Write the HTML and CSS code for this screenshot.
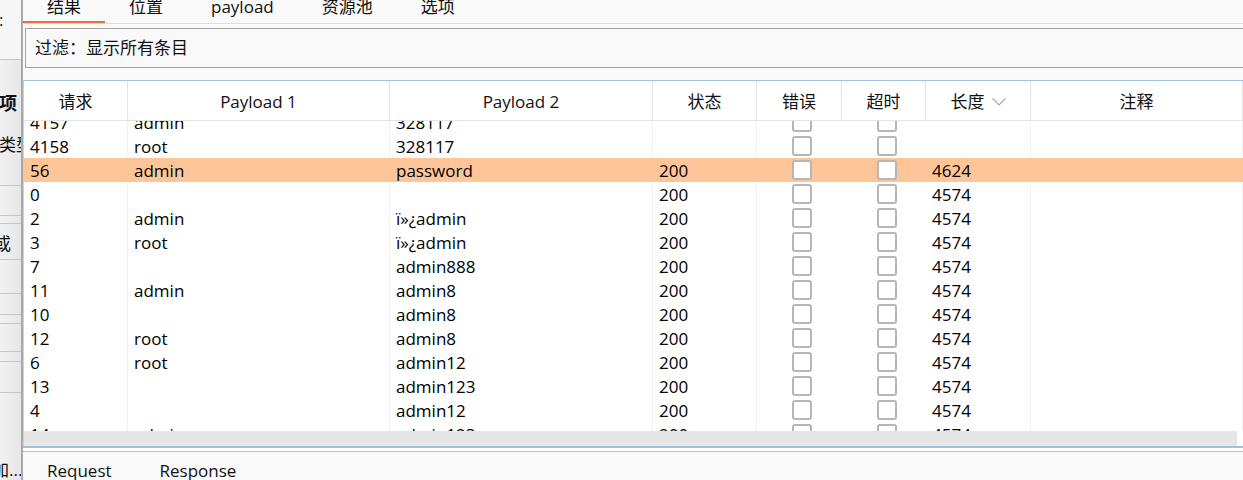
FILE: index.html
```html
<!DOCTYPE html>
<html lang="zh-CN">
<head>
<meta charset="utf-8">
<title>Intruder 结果</title>
<link rel="stylesheet" href="styles.css">
</head>
<body>
<div class="app">
  <aside class="side">
    <div class="sblk s1"><span class="stxt colon">:</span></div>
    <div class="sblk s2"><span class="stxt bold x1">项</span><span class="stxt x2">类型</span></div>
    <div class="sblk s3"></div>
    <div class="sblk s4"></div>
    <div class="sblk s5"><span class="stxt x3">或</span></div>
    <div class="sblk s6"></div>
    <div class="sblk s7"></div>
    <div class="sblk s8"></div>
    <div class="sblk s9"></div>
    <div class="sblk s10"></div>
    <div class="sblk s11"></div>
    <div class="sblk s12"><span class="stxt x4">加...</span></div>
  </aside>
  <main class="main">
    <nav class="tabs">
      <div class="tab active">结果</div>
      <div class="tab">位置</div>
      <div class="tab">payload</div>
      <div class="tab">资源池</div>
      <div class="tab">选项</div>
    </nav>
    <div class="filterwrap">
      <div class="filter">过滤：显示所有条目</div>
    </div>
    <section class="table">
      <div class="thead row-grid">
        <div class="th">请求</div>
        <div class="th">Payload 1</div>
        <div class="th">Payload 2</div>
        <div class="th">状态</div>
        <div class="th">错误</div>
        <div class="th">超时</div>
        <div class="th">长度<svg class="chev" width="14" height="8" viewBox="0 0 14 8"><path d="M0.5 0.5 L7 7 L13.5 0.5" fill="none" stroke="#aaaaaa" stroke-width="1.2"/></svg></div>
        <div class="th">注释</div>
      </div>
      <div class="tbody">
        <div class="rows">
          <div class="tr row-grid first"><div class="td">4157</div><div class="td">admin</div><div class="td">328117</div><div class="td"></div><div class="td cb"><span class="box"></span></div><div class="td cb"><span class="box"></span></div><div class="td"></div><div class="td"></div></div>
          <div class="tr row-grid"><div class="td">4158</div><div class="td">root</div><div class="td">328117</div><div class="td"></div><div class="td cb"><span class="box"></span></div><div class="td cb"><span class="box"></span></div><div class="td"></div><div class="td"></div></div>
          <div class="tr row-grid sel"><div class="td">56</div><div class="td">admin</div><div class="td">password</div><div class="td">200</div><div class="td cb"><span class="box"></span></div><div class="td cb"><span class="box"></span></div><div class="td">4624</div><div class="td"></div></div>
          <div class="tr row-grid"><div class="td">0</div><div class="td"></div><div class="td"></div><div class="td">200</div><div class="td cb"><span class="box"></span></div><div class="td cb"><span class="box"></span></div><div class="td">4574</div><div class="td"></div></div>
          <div class="tr row-grid"><div class="td">2</div><div class="td">admin</div><div class="td">ï»¿admin</div><div class="td">200</div><div class="td cb"><span class="box"></span></div><div class="td cb"><span class="box"></span></div><div class="td">4574</div><div class="td"></div></div>
          <div class="tr row-grid"><div class="td">3</div><div class="td">root</div><div class="td">ï»¿admin</div><div class="td">200</div><div class="td cb"><span class="box"></span></div><div class="td cb"><span class="box"></span></div><div class="td">4574</div><div class="td"></div></div>
          <div class="tr row-grid"><div class="td">7</div><div class="td"></div><div class="td">admin888</div><div class="td">200</div><div class="td cb"><span class="box"></span></div><div class="td cb"><span class="box"></span></div><div class="td">4574</div><div class="td"></div></div>
          <div class="tr row-grid"><div class="td">11</div><div class="td">admin</div><div class="td">admin8</div><div class="td">200</div><div class="td cb"><span class="box"></span></div><div class="td cb"><span class="box"></span></div><div class="td">4574</div><div class="td"></div></div>
          <div class="tr row-grid"><div class="td">10</div><div class="td"></div><div class="td">admin8</div><div class="td">200</div><div class="td cb"><span class="box"></span></div><div class="td cb"><span class="box"></span></div><div class="td">4574</div><div class="td"></div></div>
          <div class="tr row-grid"><div class="td">12</div><div class="td">root</div><div class="td">admin8</div><div class="td">200</div><div class="td cb"><span class="box"></span></div><div class="td cb"><span class="box"></span></div><div class="td">4574</div><div class="td"></div></div>
          <div class="tr row-grid"><div class="td">6</div><div class="td">root</div><div class="td">admin12</div><div class="td">200</div><div class="td cb"><span class="box"></span></div><div class="td cb"><span class="box"></span></div><div class="td">4574</div><div class="td"></div></div>
          <div class="tr row-grid"><div class="td">13</div><div class="td"></div><div class="td">admin123</div><div class="td">200</div><div class="td cb"><span class="box"></span></div><div class="td cb"><span class="box"></span></div><div class="td">4574</div><div class="td"></div></div>
          <div class="tr row-grid"><div class="td">4</div><div class="td"></div><div class="td">admin12</div><div class="td">200</div><div class="td cb"><span class="box"></span></div><div class="td cb"><span class="box"></span></div><div class="td">4574</div><div class="td"></div></div>
          <div class="tr row-grid"><div class="td">14</div><div class="td">admin</div><div class="td">admin123</div><div class="td">200</div><div class="td cb"><span class="box"></span></div><div class="td cb"><span class="box"></span></div><div class="td">4574</div><div class="td"></div></div>
        </div>
      </div>
      <div class="hscroll"><div class="track"></div></div>
    </section>
    <div class="gap"></div>
    <nav class="btabs">
      <div class="btab">Request</div>
      <div class="btab">Response</div>
    </nav>
  </main>
</div>
</body>
</html>
```

FILE: styles.css
```css
* { box-sizing: border-box; }
html, body {
  margin: 0;
  padding: 0;
  width: 1243px;
  height: 480px;
  overflow: hidden;
  background: #ffffff;
}
body {
  font-family: "Open Sans", "Noto Sans CJK SC", sans-serif;
  font-size: 17px;
  color: #111111;
}
.app {
  display: flex;
  width: 1243px;
  height: 480px;
}

/* left strip */
.side {
  width: 23px;
  flex: none;
  border-right: 2px solid #a9a9a9;
  background: linear-gradient(to right, #f1f1f1, #e7e7e7);
  overflow: hidden;
  display: flex;
  flex-direction: column;
}
.sblk {
  border-bottom: 1px solid #c6c6c6;
  position: relative;
  flex: none;
}
.s1 { height: 60px; background: #f6f6f6; }
.s2 { height: 126px; }
.s3 { height: 30px; }
.s4 { height: 8px; }
.s5 { height: 36px; }
.s6 { height: 34px; }
.s7 { height: 21px; }
.s8 { height: 9px; }
.s9 { height: 28px; }
.s10 { height: 10px; }
.s11 { height: 31px; }
.s12 { flex: 1; border-bottom: none; }
.stxt {
  position: absolute;
  left: 0;
  white-space: nowrap;
  font-size: 17px;
  line-height: 20px;
  color: #111;
}
.colon { top: 10px; left: -1px; }
.bold { font-weight: 700; font-size: 18px; }
.x1 { top: 33px; left: -1px; }
.x2 { top: 75px; left: -1px; }
.x3 { top: 10px; left: -6px; }
.x4 { bottom: 0px; left: -8px; }

/* main */
.main {
  flex: 1;
  min-width: 0;
  display: flex;
  flex-direction: column;
  background: #fafafa;
  overflow: hidden;
}
.tabs {
  height: 24px;
  flex: none;
  display: flex;
  border-bottom: 1px solid #dedede;
  background: #fafafa;
}
.tab {
  height: 23px;
  padding: 0 24px;
  line-height: 14px;
  white-space: nowrap;
  color: #111;
}
.tab.active {
  border-bottom: 2px solid #f2683c;
}
.filterwrap {
  flex: none;
  padding: 4px 0 0 2px;
  height: 56px;
}
.filter {
  height: 40px;
  margin-right: -10px;
  border: 1px solid #a3a3a3;
  background: #f9f9f9;
  padding-left: 9px;
  line-height: 38px;
}
.table {
  flex: none;
  border-top: 1px solid #9fc1e6;
  border-left: 1px solid #c6d3e0;
  border-bottom: 2px solid #a1bde0;
  background: #ffffff;
  display: flex;
  flex-direction: column;
}
.row-grid {
  display: grid;
  grid-template-columns: 104px 262px 263px 104px 85px 84px 105px 1fr;
}
.thead {
  height: 40px;
  border-bottom: 1px solid #e3e3e3;
  background: #ffffff;
}
.th {
  border-right: 1px solid #e3e3e3;
  display: flex;
  align-items: center;
  justify-content: center;
  gap: 7px;
  line-height: 20px;
  color: #111;
  padding-top: 2px;
}
.chev { margin-top: 1px; }
.tbody {
  height: 310px;
  overflow: hidden;
}
.rows { margin-top: -11px; }
.tr {
  height: 24px;
}
.tr.sel { background: #fec698; }
.td {
  border-right: 1px solid #f2f2f2;
  padding-left: 6px;
  padding-top: 1px;
  line-height: 23px;
  white-space: nowrap;
  overflow: hidden;
  color: #000;
}
.tr.sel .td { border-right-color: transparent; }
.td.cb {
  display: flex;
  align-items: center;
  justify-content: center;
  padding-top: 0;
  border-right-color: transparent;
}
.box {
  width: 20px;
  height: 20px;
  border: 2px solid #b6b6b6;
  border-radius: 3px;
  background: #ffffff;
}
.hscroll {
  height: 15px;
  background: #ffffff;
  padding-right: 6px;
}
.track {
  height: 15px;
  background: #e6e6e6;
}
.gap {
  height: 3px;
  flex: none;
  background: #ffffff;
  border-bottom: 1px solid #bcbcbc;
  box-sizing: content-box;
}
.btabs {
  flex: 1;
  display: flex;
  background: #f9f9f9;
}
.btab {
  padding: 0 24px;
  line-height: 37px;
  white-space: nowrap;
  color: #111;
}
```
